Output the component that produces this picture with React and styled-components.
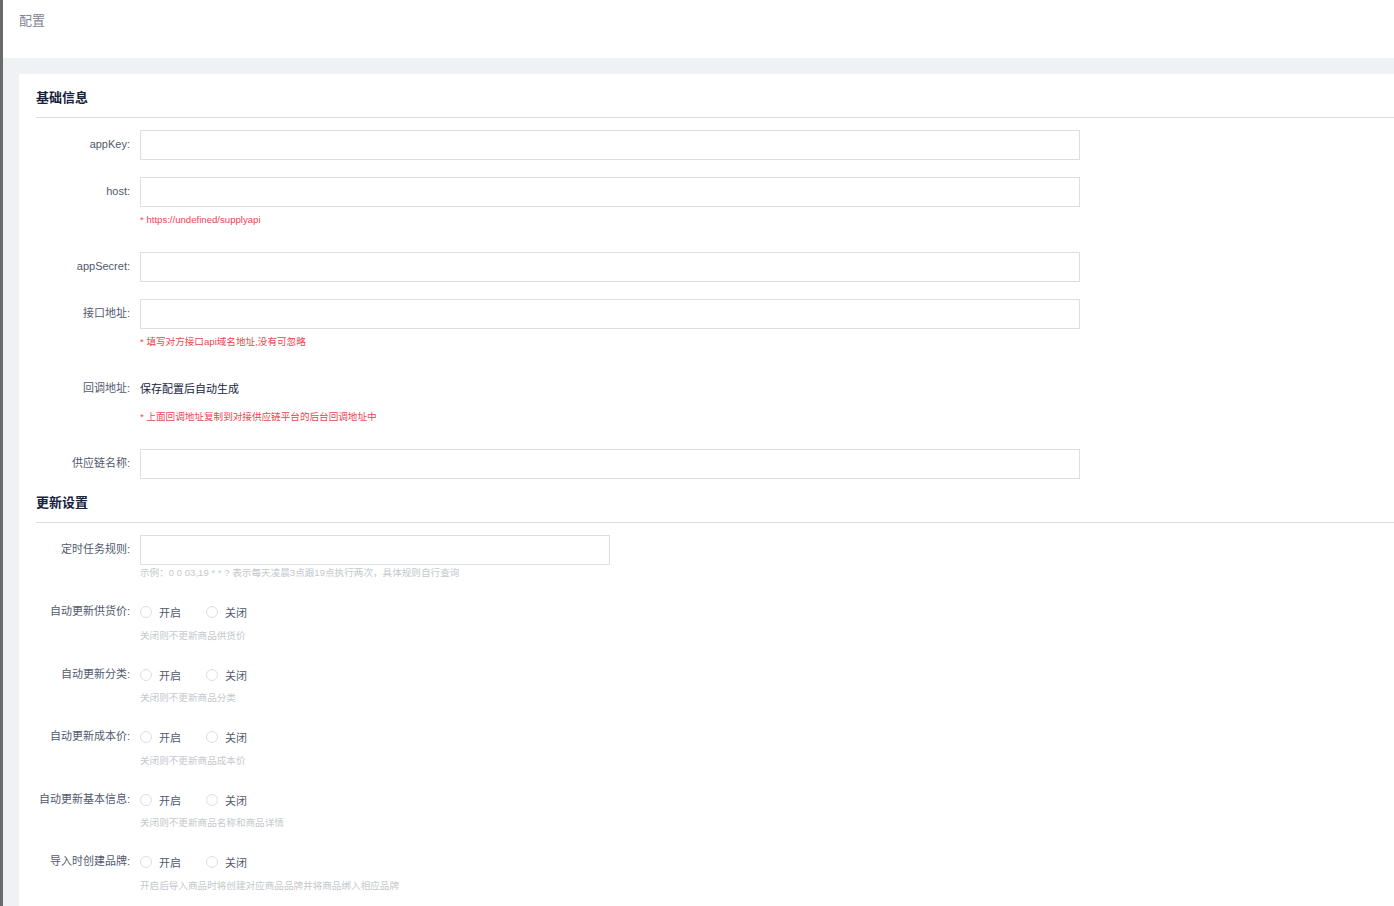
import React from "react";
import styled, { createGlobalStyle } from "styled-components";

const GlobalStyle = createGlobalStyle`
	html, body {
		margin: 0;
		padding: 0;
		overflow: hidden;
		background: #fff;
	}
	body {
		font-family: "Liberation Sans", Arial, "Noto Sans CJK SC", sans-serif;
		color: #515a6e;
	}
`;

const Page = styled.div`
	min-height: 906px;
	border-left: 3px solid #6a6a6a;
	background: #f0f1f5;
`;

const Header = styled.div`
	height: 58px;
	background: #fff;
	padding: 12px 16px 0;
	box-sizing: border-box;
	font-size: 13px;
	line-height: 18px;
	color: #808695;
`;

const Content = styled.div`
	padding: 16px 0 0 16px;
`;

const Card = styled.div`
	background: #fff;
	padding: 0 0 14px 17px;
	min-height: 832px;
	box-sizing: border-box;
`;

const SectionTitle = styled.div`
	padding: 13px 0 9px;
	line-height: 21px;
	font-size: 13px;
	font-weight: bold;
	color: #17233d;
	border-bottom: 1px solid #dcdee2;
`;

const SectionBody = styled.div`
	padding-top: 12px;
`;

const Item = styled.div`
	display: flex;
	margin-bottom: 17px;
	&:last-child {
		margin-bottom: 0;
	}
`;

const Label = styled.div`
	width: 104px;
	flex: none;
	box-sizing: border-box;
	padding-right: 10px;
	text-align: right;
	font-size: 11px;
	line-height: 29px;
	color: #515a6e;
	white-space: nowrap;
`;

const Field = styled.div`
	flex: none;
	display: flex;
	flex-direction: column;
`;

const Input = styled.input`
	width: ${(p) => p.$w}px;
	height: 30px;
	box-sizing: border-box;
	border: 1px solid #dcdee2;
	border-radius: 0;
	background: #fff;
	outline: none;
	padding: 0 7px;
	font-size: 11px;
	font-family: inherit;
`;

const Plain = styled.div`
	font-size: 11px;
	line-height: 30px;
	color: #17233d;
`;

const Tip = styled.div`
	font-size: 9.6px;
	white-space: nowrap;
	color: ${(p) => (p.$red ? "#e8464f" : "#c5c8ce")};
	line-height: ${(p) => (p.$red ? "16px" : "15px")};
	margin: ${(p) => (p.$red ? "5px 0 7px" : "0")};
`;

const RadioRow = styled.div`
	display: flex;
	align-items: center;
	height: 30px;
`;

const RadioOption = styled.label`
	display: flex;
	align-items: center;
	font-size: 11px;
	color: #515a6e;
	margin-right: 25px;
`;

const Circle = styled.span`
	width: 12px;
	height: 12px;
	box-sizing: border-box;
	border: 1px solid #dcdee2;
	border-radius: 50%;
	background: #fff;
	margin-right: 7px;
`;

const Radios = () => (
	<RadioRow>
		<RadioOption>
			<Circle />
			开启
		</RadioOption>
		<RadioOption>
			<Circle />
			关闭
		</RadioOption>
	</RadioRow>
);

const switches = [
	["自动更新供货价", "关闭则不更新商品供货价"],
	["自动更新分类", "关闭则不更新商品分类"],
	["自动更新成本价", "关闭则不更新商品成本价"],
	["自动更新基本信息", "关闭则不更新商品名称和商品详情"],
	["导入时创建品牌", "开启后导入商品时将创建对应商品品牌并将商品绑入相应品牌"],
];

export default function App() {
	return (
		<>
			<GlobalStyle />
			<Page>
				<Header>配置</Header>
				<Content>
					<Card>
						<SectionTitle>基础信息</SectionTitle>
						<SectionBody>
							<Item>
								<Label>appKey:</Label>
								<Field>
									<Input $w={940} />
								</Field>
							</Item>
							<Item>
								<Label>host:</Label>
								<Field>
									<Input $w={940} />
									<Tip $red>* https://undefined/supplyapi</Tip>
								</Field>
							</Item>
							<Item>
								<Label>appSecret:</Label>
								<Field>
									<Input $w={940} />
								</Field>
							</Item>
							<Item>
								<Label>接口地址:</Label>
								<Field>
									<Input $w={940} />
									<Tip $red>* 填写对方接口api域名地址,没有可忽略</Tip>
								</Field>
							</Item>
							<Item>
								<Label>回调地址:</Label>
								<Field>
									<Plain>保存配置后自动生成</Plain>
									<Tip $red>* 上面回调地址复制到对接供应链平台的后台回调地址中</Tip>
								</Field>
							</Item>
							<Item>
								<Label>供应链名称:</Label>
								<Field>
									<Input $w={940} />
								</Field>
							</Item>
						</SectionBody>

						<SectionTitle>更新设置</SectionTitle>
						<SectionBody>
							<Item>
								<Label>定时任务规则:</Label>
								<Field>
									<Input $w={470} />
									<Tip>示例：0 0 03,19 * * ? 表示每天凌晨3点跟19点执行两次，具体规则自行查询</Tip>
								</Field>
							</Item>
							{switches.map(([label, tip]) => (
								<Item key={label}>
									<Label>{label}:</Label>
									<Field>
										<Radios />
										<Tip style={{ marginTop: "0.5px" }}>{tip}</Tip>
									</Field>
								</Item>
							))}
						</SectionBody>
					</Card>
				</Content>
			</Page>
		</>
	);
}
